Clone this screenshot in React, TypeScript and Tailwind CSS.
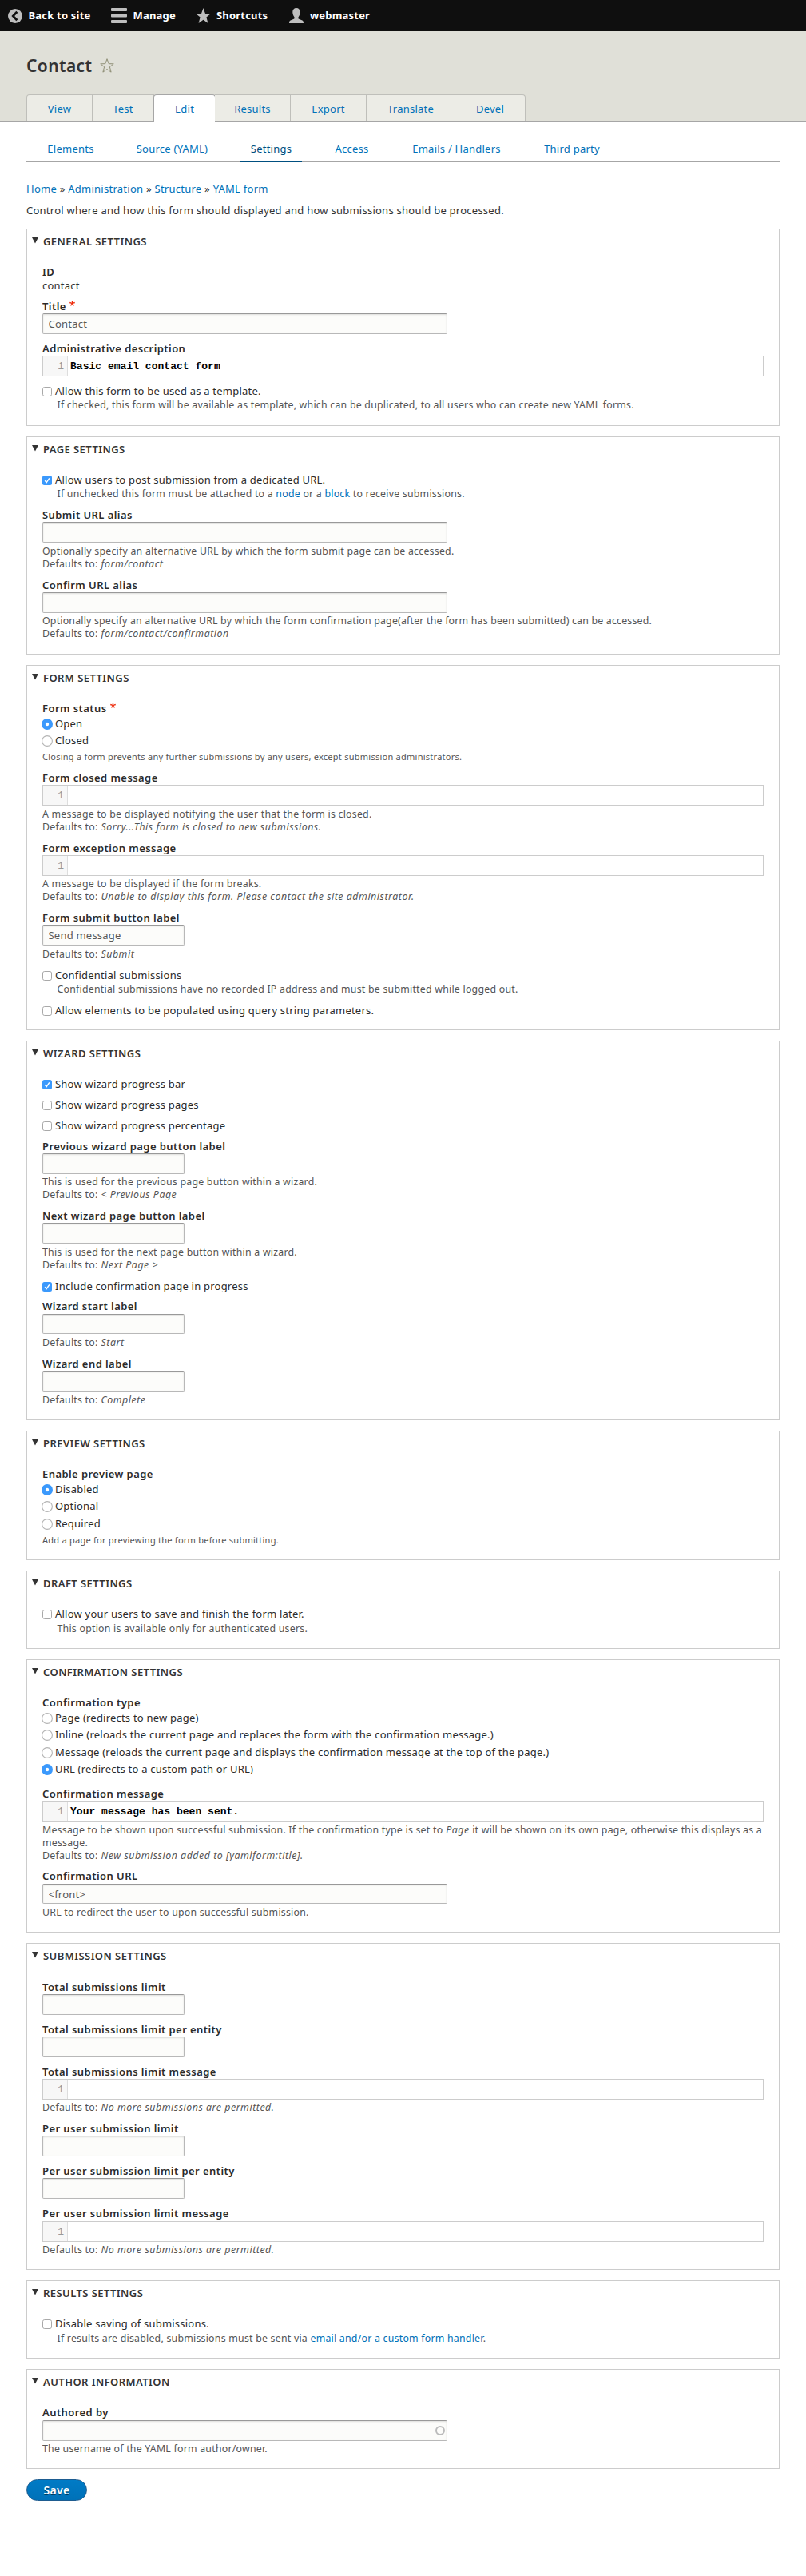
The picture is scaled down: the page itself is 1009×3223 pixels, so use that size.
import React from 'react';
import clsx from 'clsx';

type Kids = { children?: React.ReactNode; className?: string };

function Panel({ title, className, underline, children }: Kids & { title: string; underline?: boolean }) {
  return (
    <section className={clsx('mb-[13px] flex flex-col items-start border border-[#ccc] pl-[19px] pr-[19px] pt-[6px]', className)}>
      <h2 className="-ml-[13px] flex h-[18px] items-start text-[13px] font-semibold uppercase leading-[18px] tracking-[0.43px] text-[#333]">
        <svg className="mr-[6px] mt-1 h-2 w-2 fill-[#333]" viewBox="0 0 8 8">
          <path d="M0 0h8L4 7.6z" />
        </svg>
        <span className={clsx(underline && 'underline decoration-1 underline-offset-[2px]')}>{title}</span>
      </h2>
      {children}
    </section>
  );
}

function Asterisk() {
  return (
    <svg className="ml-[4px] mt-[2px] h-[7px] w-[7px] fill-[#ee2a0a]" viewBox="0 0 16 16">
      <path d="M0 7.562l1.114-3.438c2.565.906 4.43 1.688 5.59 2.35C6.398 3.553 6.237 1.544 6.22.447h3.511c-.05 1.597-.234 3.6-.558 6.003 1.664-.838 3.566-1.613 5.714-2.325L16 7.562c-2.05.678-4.06 1.131-6.028 1.356.984.856 2.372 2.381 4.166 4.575l-2.906 2.059c-.937-1.278-2.044-3.021-3.321-5.227-1.195 2.287-2.247 4.031-3.152 5.225l-2.856-2.057c1.872-2.309 3.213-3.834 4.022-4.575C3.839 8.515 1.864 8.062 0 7.562z" />
    </svg>
  );
}

function Label({ children, className = 'mt-[9px]', required }: Kids & { required?: boolean }) {
  return (
    <div className={clsx('flex h-[18px] whitespace-nowrap text-[13px] font-semibold leading-[18px] tracking-[0.43px] text-[#2b2b2b]', className)}>
      {children}
      {required && <Asterisk />}
    </div>
  );
}

function Field({ value = '', wide, className = 'h-[26px]' }: { value?: string; wide?: boolean; className?: string }) {
  return (
    <input
      type="text"
      defaultValue={value}
      className={clsx(
        'block rounded-[2px] border border-[#b8b8b8] border-t-[#999] bg-[#fcfcfa] px-[6.5px] text-[13px] leading-[24px] tracking-[0.22px] text-[#595959] shadow-[inset_0_1px_2px_rgba(0,0,0,0.125)] outline-none',
        wide ? 'w-[507px]' : 'w-[178px]',
        className,
      )}
    />
  );
}

function Editor({ value, className }: { value?: string; className?: string }) {
  return (
    <div className={clsx("flex h-[26px] w-full border border-[#ccc] bg-white font-['Liberation_Mono',monospace] text-[13px] leading-[25px]", className)}>
      <span className="w-[31px] border-r border-[#ddd] bg-[#f7f7f7] pr-[4px] text-right text-[#999]">1</span>
      <span className="whitespace-pre pl-[3px] font-bold tracking-[0.02px] text-black">{value}</span>
    </div>
  );
}

function Help({ children, className = 'mt-[2px]' }: Kids) {
  return <div className={clsx('-mb-px pt-px text-[12.35px] leading-[16px] tracking-[0.23px] text-[#555]', className)}>{children}</div>;
}

function SmallHelp({ children }: Kids) {
  return <div className="mt-1 text-[11.05px] leading-[16px] tracking-[0.23px] text-[#555]">{children}</div>;
}

function Em({ children }: Kids) {
  return <em className="ml-[0.5px] tracking-[0.54px]">{children}</em>;
}

function Link({ children }: Kids) {
  return <a className="text-[#0071b8]">{children}</a>;
}

function Check({ checked, children, className = 'mt-[10px]' }: Kids & { checked?: boolean }) {
  return (
    <label className={clsx('flex h-[18px] whitespace-nowrap text-[13px] leading-[18px] tracking-[0.22px] text-[#2b2b2b]', className)}>
      <svg className="mr-[4px] mt-1 h-3 w-3" viewBox="0 0 12 12" fill="none">
        {checked ? (
          <>
            <rect width="12" height="12" rx="2.5" fill="#3b99fc" />
            <path d="M3.2 6.3l2 2.3 3.6-5.2" stroke="#fff" strokeWidth="1.5" />
          </>
        ) : (
          <rect x=".5" y=".5" width="11" height="11" rx="2.2" fill="#fff" stroke="#a9a9a9" />
        )}
      </svg>
      {children}
    </label>
  );
}

function Radio({ checked, children, className = 'mt-[3px]' }: Kids & { checked?: boolean }) {
  return (
    <label className={clsx('-ml-px flex h-[18px] whitespace-nowrap text-[13px] leading-[18px] tracking-[0.21px] text-[#2b2b2b]', className)}>
      <svg className="mr-[3px] mt-[3px] h-[14px] w-[14px]" viewBox="0 0 14 14">
        {checked ? (
          <>
            <circle cx="7" cy="7" r="7" fill="#3b99fc" />
            <circle cx="7" cy="7" r="2.2" fill="#fff" />
          </>
        ) : (
          <circle cx="7" cy="7" r="6.4" fill="#fff" stroke="#b4b4b4" strokeWidth="1.1" />
        )}
      </svg>
      {children}
    </label>
  );
}

const STAR = 'M9.5 0l2.5 6.9 7 .2-5.6 4.4 2 7.5-5.9-4.2L3.6 19l2-7.5L0 7.1l7-.2z';

function Toolbar() {
  return (
    <nav className="flex h-[39px] items-start bg-[#0f0f0f] pl-[10px] text-[13px] font-bold leading-[18px] tracking-[0.2px] text-white shadow-[0_1px_3px_1px_rgba(0,0,0,0.3)]">
      <a className="flex w-[129px]">
        <svg className="mr-[7.5px] mt-[11px] h-[18px] w-[18px]" viewBox="0 0 18 18">
          <circle cx="9" cy="9" r="9" fill="#bebebe" />
          <path d="M11.3 3.7L6.3 9l5 5.3" fill="none" stroke="#0f0f0f" strokeWidth="2.8" />
        </svg>
        <span className="mt-[10px]">Back to site</span>
      </a>
      <a className="flex w-[106px]">
        <svg className="mr-[7.5px] mt-[10px] h-[19px] w-5 fill-[#bebebe]" viewBox="0 0 20 19">
          <rect width="20" height="4" rx="1" />
          <rect y="7.5" width="20" height="4" rx="1" />
          <rect y="15" width="20" height="4" rx="1" />
        </svg>
        <span className="mt-[10px]">Manage</span>
      </a>
      <a className="flex w-[117px]">
        <svg className="mr-[7px] mt-[10px] h-[19px] w-[19px] fill-[#bebebe]" viewBox="0 0 19 19">
          <path d={STAR} />
        </svg>
        <span className="mt-[10px]">Shortcuts</span>
      </a>
      <a className="flex">
        <svg className="mr-[8px] mt-[10px] h-[19px] w-[18px] fill-[#bebebe]" viewBox="0 0 18 19">
          <path d="M9 0c3 0 4.7 2 4.7 5 0 2.6-1 4.8-2.1 6.2-.5.8-.3 2.2.6 2.6l4.2 1.7c1.1.5 1.600 1.4 1.600 3.500H0c0-2.1.5-3 1.600-3.500l4.2-1.7c.9-.4 1.1-1.8.6-2.6C5.3 9.8 4.3 7.6 4.3 5c0-3 1.7-5 4.7-5z" />
        </svg>
        <span className="mt-[10px]">webmaster</span>
      </a>
    </nav>
  );
}

const TABS = [
  { name: 'View', className: 'w-[83px] rounded-tl-[4px] border-l' },
  { name: 'Test', className: 'w-[77px]' },
  { name: 'Edit', className: '' },
  { name: 'Results', className: 'w-[95px]' },
  { name: 'Export', className: 'w-[95px]' },
  { name: 'Translate', className: 'w-[111px]' },
  { name: 'Devel', className: 'w-[88px] rounded-tr-[4px]' },
];

const SUBTABS = [
  { name: 'Elements', className: 'w-[83px]' },
  { name: 'Source (YAML)', className: 'w-[115px]' },
  { name: 'Settings', className: 'w-[77px] border-b-2 border-[#004f80] text-[#004f80]' },
  { name: 'Access', className: 'w-[69px]' },
  { name: 'Emails / Handlers', className: 'w-[137px]' },
  { name: 'Third party', className: 'w-[96px]' },
];

export default function App() {
  return (
    <div className="h-[3223px] w-full bg-white font-['Noto_Sans','Open_Sans',sans-serif] text-[13px] text-[#333]">
      <Toolbar />
      <header className="h-[114px] border-b border-[#a6a6a6] bg-[#e0e0d8] px-[33px] pt-[29px]">
        <h1 className="flex h-[28px] text-[21px] font-semibold leading-[28px] tracking-[0.41px]">
          Contact
          <svg className="ml-[9px] mt-[5px] h-[18px] w-[18px]" viewBox="-0.6 -0.8 20.2 20.8">
            <path d={STAR} fill="none" stroke="#8a8a70" strokeWidth="1.1" />
          </svg>
        </h1>
        <nav className="mt-[22px] flex h-[35px] text-[#0071b8]">
          {TABS.map((t) =>
            t.name === 'Edit' ? (
              <a key={t.name} className="-ml-px h-[35px] w-[78px] rounded-t-[4px] border border-b-0 border-[#a6a6a6] bg-white text-center leading-[34px] tracking-[0.22px]">
                {t.name}
              </a>
            ) : (
              <a
                key={t.name}
                className={clsx('h-[34px] border-r border-t border-[#bfbfba] bg-[#ecece6] text-center leading-[34px] tracking-[0.22px]', t.name === 'Results' && '-ml-px', t.className)}
              >
                {t.name}
              </a>
            ),
          )}
        </nav>
      </header>
      <main className="px-[33px]">
        <nav className="mt-[21px] flex h-[29px] gap-[28px] border-b border-[#a6a6a6] pl-[14px] leading-[24px] tracking-[0.24px] text-[#0071b8]">
          {SUBTABS.map((t) => (
            <a key={t.name} className={clsx('h-[29px] whitespace-nowrap text-center', t.className)}>
              {t.name}
            </a>
          ))}
        </nav>
        <div className="mt-[24px] h-[18px] leading-[18px] tracking-[0.26px]">
          <Link>Home</Link> » <Link>Administration</Link> » <Link>Structure</Link> » <Link>YAML form</Link>
        </div>
        <p className="mb-[14px] mt-[9px] h-[18px] leading-[18px] tracking-[0.25px]">
          Control where and how this form should displayed and how submissions should be processed.
        </p>

        <Panel title="General settings" className="h-[247px]">
          <Label className="mt-[20px]">ID</Label>
          <div className="-mt-px h-[18px] leading-[18px] tracking-[0.22px]">contact</div>
          <Label className="mt-[8px]" required>Title</Label>
          <Field wide value="Contact" />
          <Label>Administrative description</Label>
          <Editor value="Basic email contact form" />
          <Check className="mt-[9px]">Allow this form to be used as a template.</Check>
          <Help className="ml-[18.5px]">
            If checked, this form will be available as template, which can be duplicated, to all users who can create new YAML forms.
          </Help>
        </Panel>

        <Panel title="Page settings" className="h-[273px]">
          <Check className="mt-[20px]" checked>Allow users to post submission from a dedicated URL.</Check>
          <Help className="ml-[18.5px]">
            If unchecked this form must be attached to a <Link>node</Link> or a <Link>block</Link> to receive submissions.
          </Help>
          <Label className="mt-[10px]">Submit URL alias</Label>
          <Field wide />
          <Help>
            Optionally specify an alternative URL by which the form submit page can be accessed.
            <br />
            Defaults to: <Em>form/contact</Em>
          </Help>
          <Label className="mt-[10px]">Confirm URL alias</Label>
          <Field wide />
          <Help className="mt-px">
            <span className="tracking-[0.2px]">
              Optionally specify an alternative URL by which the form confirmation page(after the form has been submitted) can be accessed.
            </span>
            <br />
            Defaults to: <Em>form/contact/confirmation</Em>
          </Help>
        </Panel>

        <Panel title="Form settings" className="h-[457px]">
          <Label className="mt-[20px]" required>Form status</Label>
          <Radio className="mt-px" checked>Open</Radio>
          <Radio>Closed</Radio>
          <SmallHelp>Closing a form prevents any further submissions by any users, except submission administrators.</SmallHelp>
          <Label>Form closed message</Label>
          <Editor />
          <Help>
            A message to be displayed notifying the user that the form is closed.
            <br />
            Defaults to: <Em>Sorry...This form is closed to new submissions.</Em>
          </Help>
          <Label className="mt-[10px]">Form exception message</Label>
          <Editor />
          <Help className="mt-px">
            A message to be displayed if the form breaks.
            <br />
            Defaults to: <Em>Unable to display this form. Please contact the site administrator.</Em>
          </Help>
          <Label className="mt-[10px]">Form submit button label</Label>
          <Field value="Send message" />
          <Help>
            Defaults to: <Em>Submit</Em>
          </Help>
          <Check>Confidential submissions</Check>
          <Help className="ml-[18.5px]">Confidential submissions have no recorded IP address and must be submitted while logged out.</Help>
          <Check>Allow elements to be populated using query string parameters.</Check>
        </Panel>

        <Panel title="Wizard settings" className="h-[475px]">
          <Check className="mt-[20px]" checked>Show wizard progress bar</Check>
          <Check className="mt-[8px]">Show wizard progress pages</Check>
          <Check className="mt-[8px]">Show wizard progress percentage</Check>
          <Label className="mt-[8px]">Previous wizard page button label</Label>
          <Field />
          <Help className="mt-px">
            This is used for the previous page button within a wizard.
            <br />
            Defaults to: <Em>&lt; Previous Page</Em>
          </Help>
          <Label className="mt-[10px]">Next wizard page button label</Label>
          <Field />
          <Help>
            This is used for the next page button within a wizard.
            <br />
            Defaults to: <Em>Next Page &gt;</Em>
          </Help>
          <Check checked>Include confirmation page in progress</Check>
          <Label className="mt-[7px]">Wizard start label</Label>
          <Field className="mt-px h-[25px]" />
          <Help>
            Defaults to: <Em>Start</Em>
          </Help>
          <Label className="mt-[10px]">Wizard end label</Label>
          <Field />
          <Help>
            Defaults to: <Em>Complete</Em>
          </Help>
        </Panel>

        <Panel title="Preview settings" className="h-[162px]">
          <Label className="mt-[20px]">Enable preview page</Label>
          <Radio className="mt-px" checked>Disabled</Radio>
          <Radio>Optional</Radio>
          <Radio className="mt-[4px]">Required</Radio>
          <SmallHelp>Add a page for previewing the form before submitting.</SmallHelp>
        </Panel>

        <Panel title="Draft settings" className="h-[98px]">
          <Check className="mt-[20px]">Allow your users to save and finish the form later.</Check>
          <Help className="ml-[18.5px] mt-px">This option is available only for authenticated users.</Help>
        </Panel>

        <Panel title="Confirmation settings" className="h-[342px]" underline>
          <Label className="mt-[20px]">Confirmation type</Label>
          <Radio className="mt-px">Page (redirects to new page)</Radio>
          <Radio>Inline (reloads the current page and replaces the form with the confirmation message.)</Radio>
          <Radio className="mt-[4px]">Message (reloads the current page and displays the confirmation message at the top of the page.)</Radio>
          <Radio checked>URL (redirects to a custom path or URL)</Radio>
          <Label className="mt-[13px]">Confirmation message</Label>
          <Editor value="Your message has been sent." />
          <Help>
            Message to be shown upon successful submission. If the confirmation type is set to <Em>Page</Em> it will be shown on its own page, otherwise this displays as a
            <br />
            message.
            <br />
            Defaults to: <Em>New submission added to [yamlform:title].</Em>
          </Help>
          <Label>Confirmation URL</Label>
          <Field wide value="<front>" className="mt-px h-[25px]" />
          <Help>URL to redirect the user to upon successful submission.</Help>
        </Panel>

        <Panel title="Submission settings" className="h-[409px]">
          <Label className="mt-[21px]">Total submissions limit</Label>
          <Field />
          <Label>Total submissions limit per entity</Label>
          <Field />
          <Label>Total submissions limit message</Label>
          <Editor />
          <Help className="mt-px">
            Defaults to: <Em>No more submissions are permitted.</Em>
          </Help>
          <Label className="mt-[10px]">Per user submission limit</Label>
          <Field />
          <Label>Per user submission limit per entity</Label>
          <Field />
          <Label>Per user submission limit message</Label>
          <Editor className="mt-px" />
          <Help className="mt-px">
            Defaults to: <Em>No more submissions are permitted.</Em>
          </Help>
        </Panel>

        <Panel title="Results settings" className="h-[98px]">
          <Check className="mt-[20px]">Disable saving of submissions.</Check>
          <Help className="ml-[18.5px] mt-px">
            If results are disabled, submissions must be sent via <Link>email and/or a custom form handler</Link>.
          </Help>
        </Panel>

        <Panel title="Author information" className="h-[125px]">
          <Label className="mt-[20px]">Authored by</Label>
          <div className="relative mt-px">
            <Field wide />
            <svg className="absolute right-[3px] top-[7px] h-3 w-3" viewBox="0 0 12 12">
              <circle cx="6" cy="6" r="5" fill="none" stroke="#bbb" strokeWidth="2" />
            </svg>
          </div>
          <Help className="mt-px">The username of the YAML form author/owner.</Help>
        </Panel>

        <button className="h-[27px] w-[76px] rounded-full border border-[#1e5c90] bg-linear-to-b from-[#007bc6] to-[#0071b8] text-[14px] font-semibold leading-[25px] tracking-[0.32px] text-white [text-shadow:0_1px_rgba(0,0,0,0.5)]">
          Save
        </button>
      </main>
    </div>
  );
}
